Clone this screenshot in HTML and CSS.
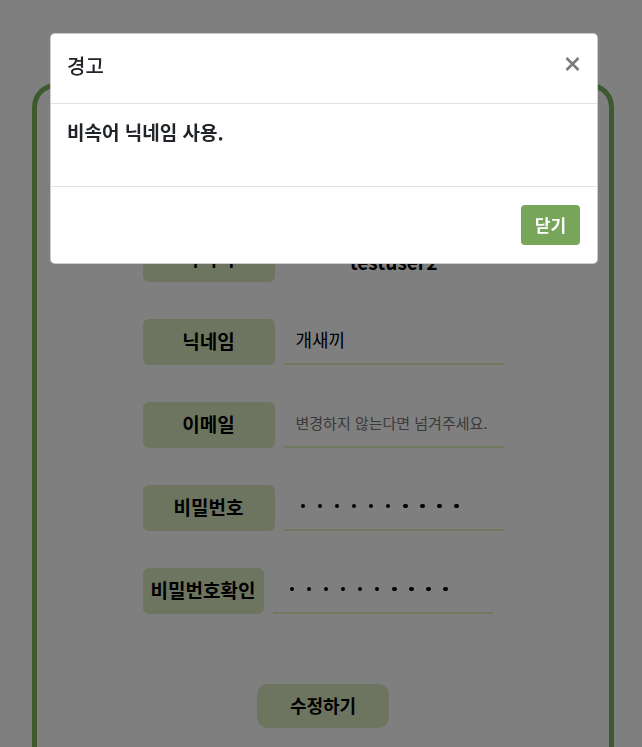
FILE: index.html
```html
<!DOCTYPE html>
<html lang="ko">
<head>
<meta charset="utf-8">
<title>회원정보 수정</title>
<link rel="stylesheet" href="styles.css">
</head>
<body>
<main class="card">
  <form class="form">
    <div class="row">
      <div class="label">아이디</div>
      <div class="value value-static">testuser2</div>
    </div>
    <div class="row">
      <div class="label">닉네임</div>
      <div class="value">개새끼</div>
    </div>
    <div class="row">
      <div class="label">이메일</div>
      <div class="value placeholder">변경하지 않는다면 넘겨주세요.</div>
    </div>
    <div class="row">
      <div class="label">비밀번호</div>
      <div class="value dots"><span></span><span></span><span></span><span></span><span></span><span></span><span></span><span></span><span></span><span></span></div>
    </div>
    <div class="row">
      <div class="label label-narrow">비밀번호확인</div>
      <div class="value dots"><span></span><span></span><span></span><span></span><span></span><span></span><span></span><span></span><span></span><span></span></div>
    </div>
    <div class="actions">
      <button type="button" class="submit">수정하기</button>
    </div>
  </form>
</main>

<div class="backdrop"></div>

<div class="modal">
  <div class="modal-header">
    <h5 class="modal-title">경고</h5>
    <button type="button" class="close" aria-label="Close">
      <svg width="15" height="14" viewBox="0 0 15 14"><path d="M1.5 1 L13.5 13 M13.5 1 L1.5 13" stroke="#7a7a7a" stroke-width="2.6" stroke-linecap="butt" fill="none"/></svg>
    </button>
  </div>
  <div class="modal-body">비속어 닉네임 사용.</div>
  <div class="modal-footer">
    <button type="button" class="btn-close">닫기</button>
  </div>
</div>
</body>
</html>
```

FILE: styles.css
```css
* { box-sizing: border-box; }

html, body {
  margin: 0;
  padding: 0;
  height: 100%;
  overflow: hidden;
}

body {
  background: #ffffff;
  font-family: "Noto Sans CJK KR", "Noto Sans", sans-serif;
  color: #000;
}

.card {
  margin: 83px 0 0 32px;
  width: 582px;
  height: 664px;
  border: 5px solid #7bb45e;
  border-bottom: none;
  border-radius: 24px 24px 0 0;
  padding-top: 148px;
}

.form {
  width: 361px;
  margin: 0 auto;
  display: flex;
  flex-direction: column;
  gap: 37px;
}

.row {
  display: flex;
  align-items: center;
  gap: 9px;
  height: 46px;
}

.label {
  width: 132px;
  height: 46px;
  background: #dbebc1;
  border-radius: 6px;
  display: flex;
  align-items: center;
  justify-content: center;
  padding-bottom: 4px;
  font-size: 19px;
  font-weight: 700;
}

.label-narrow { width: 121px; }

.value {
  width: 220px;
  height: 46px;
  border-bottom: 2px solid #dff2c0;
  display: flex;
  align-items: center;
  padding: 0 12px 4px;
  font-size: 18px;
}

.value-static {
  border-bottom: none;
  justify-content: center;
  padding: 4px 12px 0;
  font-size: 19px;
  font-weight: 600;
}

.placeholder {
  font-size: 15px;
  color: #757575;
}

.dots {
  gap: 12.6px;
  padding-left: 17px;
  padding-bottom: 2px;
}

.dots span {
  width: 4.5px;
  height: 4.5px;
  border-radius: 50%;
  background: #000;
}

.actions {
  display: flex;
  justify-content: center;
  padding-top: 33px;
}

.submit {
  width: 132px;
  height: 44px;
  border: none;
  border-radius: 11px;
  background: #dbebc1;
  font-family: inherit;
  font-size: 18px;
  font-weight: 700;
  color: #000;
  padding: 0 0 3px;
}

.backdrop {
  position: fixed;
  inset: 0;
  background: rgba(0, 0, 0, 0.5);
}

.modal {
  position: fixed;
  top: 33px;
  left: 50px;
  width: 548px;
  background: #fff;
  border: 1px solid rgba(0, 0, 0, 0.2);
  border-radius: 5px;
  color: #212529;
}

.modal-header {
  height: 70px;
  display: flex;
  align-items: center;
  justify-content: space-between;
  padding: 0 16px 5px 16px;
  border-bottom: 1px solid #dee2e6;
}

.modal-title {
  margin: 0;
  font-size: 20px;
  font-weight: 500;
  line-height: 30px;
  padding-bottom: 0;
}

.close {
  border: none;
  background: none;
  padding: 0;
  width: 15px;
  height: 14px;
  display: flex;
  margin-right: 1px;
  margin-top: -5px;
}

.modal-body {
  padding: 13px 16px 39px;
  font-size: 19px;
  font-weight: 700;
  line-height: 30px;
  border-bottom: 1px solid #dee2e6;
}

.modal-footer {
  display: flex;
  justify-content: flex-end;
  padding: 18px 17px 18px;
}

.btn-close {
  width: 59px;
  height: 40px;
  border: none;
  border-radius: 4px;
  background: #77a55a;
  color: #fff;
  font-family: inherit;
  font-size: 17px;
  font-weight: 700;
  padding: 0 0 2px;
}
```
